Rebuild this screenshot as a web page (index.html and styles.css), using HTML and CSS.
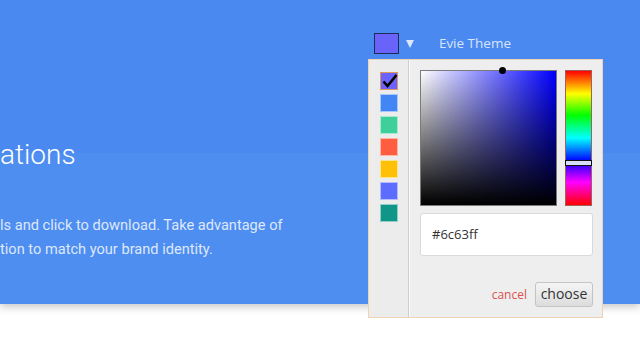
FILE: index.html
```html
<!DOCTYPE html>
<html>
<head>
<meta charset="utf-8">
<link rel="stylesheet" href="styles.css">
</head>
<body>
<div class="banner">
  <div class="theme-row">
    <span class="theme-swatch"></span>
    <span class="theme-caret"></span>
    <span class="theme-name">Evie Theme</span>
  </div>
  <h1 class="headline">ations</h1>
  <p class="lead">ls and click to download. Take advantage of<br>tion to match your brand identity.</p>

  <div class="picker">
    <div class="presets">
      <span class="preset selected" style="background:#6c63ff">
        <svg class="check" width="16" height="16" viewBox="0 0 16 16"><path d="M1.5 8.5 L5.5 13 L14.5 2" fill="none" stroke="#000" stroke-width="2.6" stroke-linejoin="miter"/></svg>
      </span>
      <span class="preset" style="background:#4285f4"></span>
      <span class="preset" style="background:#3ecf9b"></span>
      <span class="preset" style="background:#ff5d40"></span>
      <span class="preset" style="background:#ffc107"></span>
      <span class="preset" style="background:#5b6cff"></span>
      <span class="preset" style="background:#0f9688"></span>
    </div>
    <div class="editor">
      <div class="pickers">
        <div class="sv">
          <span class="sv-dot"></span>
        </div>
        <div class="hue">
          <span class="hue-mark"></span>
        </div>
      </div>
      <div class="hex">#6c63ff</div>
      <div class="actions">
        <span class="cancel">cancel</span>
        <span class="choose">choose</span>
      </div>
    </div>
  </div>
</div>
</body>
</html>
```
FILE: styles.css
```css
html, body {
  margin: 0;
  padding: 0;
  background: #ffffff;
  overflow: hidden;
}
body {
  width: 640px;
  height: 360px;
  font-family: "Open Sans", "Liberation Sans", sans-serif;
}
.banner {
  position: relative;
  height: 304px;
  box-sizing: border-box;
  padding-top: 33px;
  background: linear-gradient(to bottom, #4a89ef 0, #4a89ef 153px, #4e8ef1 153px, #4e8ef1 100%);
  box-shadow: 0 3px 8px rgba(0, 0, 0, 0.22);
}
.theme-row {
  display: flex;
  align-items: center;
  justify-content: flex-end;
  padding-right: 129px;
  height: 21px;
}
.theme-swatch {
  width: 23px;
  height: 19px;
  background: #6a63fa;
  border: 1px solid #1e2a5a;
}
.theme-caret {
  margin-left: 7px;
  width: 0;
  height: 0;
  border-left: 4.5px solid transparent;
  border-right: 4.5px solid transparent;
  border-top: 8px solid #dbe6fb;
}
.theme-name {
  margin-left: 25px;
  font-size: 13.5px;
  color: #d8e4fb;
  line-height: 21px;
}
.headline {
  margin: 0;
  margin-top: 83px;
  font-family: Roboto, "Liberation Sans", sans-serif;
  font-weight: 300;
  font-size: 28px;
  line-height: 36px;
  color: #ffffff;
}
.lead {
  margin: 0;
  margin-top: 40px;
  font-family: Roboto, "Liberation Sans", sans-serif;
  font-size: 14.6px;
  line-height: 24px;
  color: rgba(255, 255, 255, 0.82);
}
.picker {
  position: absolute;
  left: 368px;
  top: 59px;
  width: 235px;
  height: 259px;
  box-sizing: border-box;
  border: 1px solid #efd3b3;
  background: #eeeeee;
  display: flex;
}
.presets {
  width: 40px;
  border-right: 1px solid #cfcfcf;
  box-shadow: 1px 0 0 #fafafa;
  background: #ececec;
  padding: 12px 0 0 11px;
  box-sizing: border-box;
  display: flex;
  flex-direction: column;
  gap: 4px;
}
.preset {
  width: 18px;
  height: 18px;
  box-sizing: border-box;
  border: 1px solid rgba(255, 255, 255, 0.55);
  position: relative;
  display: block;
}
.preset.selected {
  border: 1px solid #e0975a;
}
.check {
  position: absolute;
  left: 1px;
  top: 0px;
}
.editor {
  flex: 1;
  padding: 10px 9px 10px 11px;
  display: flex;
  flex-direction: column;
}
.pickers {
  display: flex;
  gap: 8px;
}
.sv {
  position: relative;
  width: 137px;
  height: 136px;
  box-sizing: border-box;
  border: 1px solid #7a7a7a;
  background:
    linear-gradient(to top, #000, rgba(0, 0, 0, 0)),
    linear-gradient(to right, #fff, rgba(255, 255, 255, 0)),
    #0000ff;
}
.sv-dot {
  position: absolute;
  left: 78px;
  top: -4px;
  width: 7px;
  height: 7px;
  border-radius: 50%;
  background: #000;
}
.hue {
  position: relative;
  width: 27px;
  height: 136px;
  box-sizing: border-box;
  border: 1px solid #a06060;
  background: linear-gradient(to bottom, #ff0000 0%, #ffff00 17%, #00ff00 33%, #00ffff 50%, #0000ff 67%, #ff00ff 83%, #ff0000 100%);
}
.hue-mark {
  position: absolute;
  left: -1px;
  right: -1px;
  top: 89px;
  height: 4px;
  border: 1px solid #111;
  background: #d6dcfb;
}
.hex {
  margin-top: 7px;
  height: 43px;
  box-sizing: border-box;
  background: #fff;
  border: 1px solid #dadada;
  border-radius: 3px;
  padding-left: 11px;
  font-size: 13px;
  line-height: 41px;
  color: #333;
}
.actions {
  margin-top: 26px;
  display: flex;
  justify-content: flex-end;
  align-items: center;
  gap: 8px;
}
.cancel {
  font-size: 12px;
  color: #d9534f;
}
.choose {
  width: 58px;
  height: 25px;
  box-sizing: border-box;
  border: 1px solid #c4c4c4;
  border-radius: 3px;
  background: linear-gradient(to bottom, #f5f5f5, #dcdcdc);
  font-size: 14px;
  line-height: 22px;
  text-align: center;
  color: #333;
}
```
